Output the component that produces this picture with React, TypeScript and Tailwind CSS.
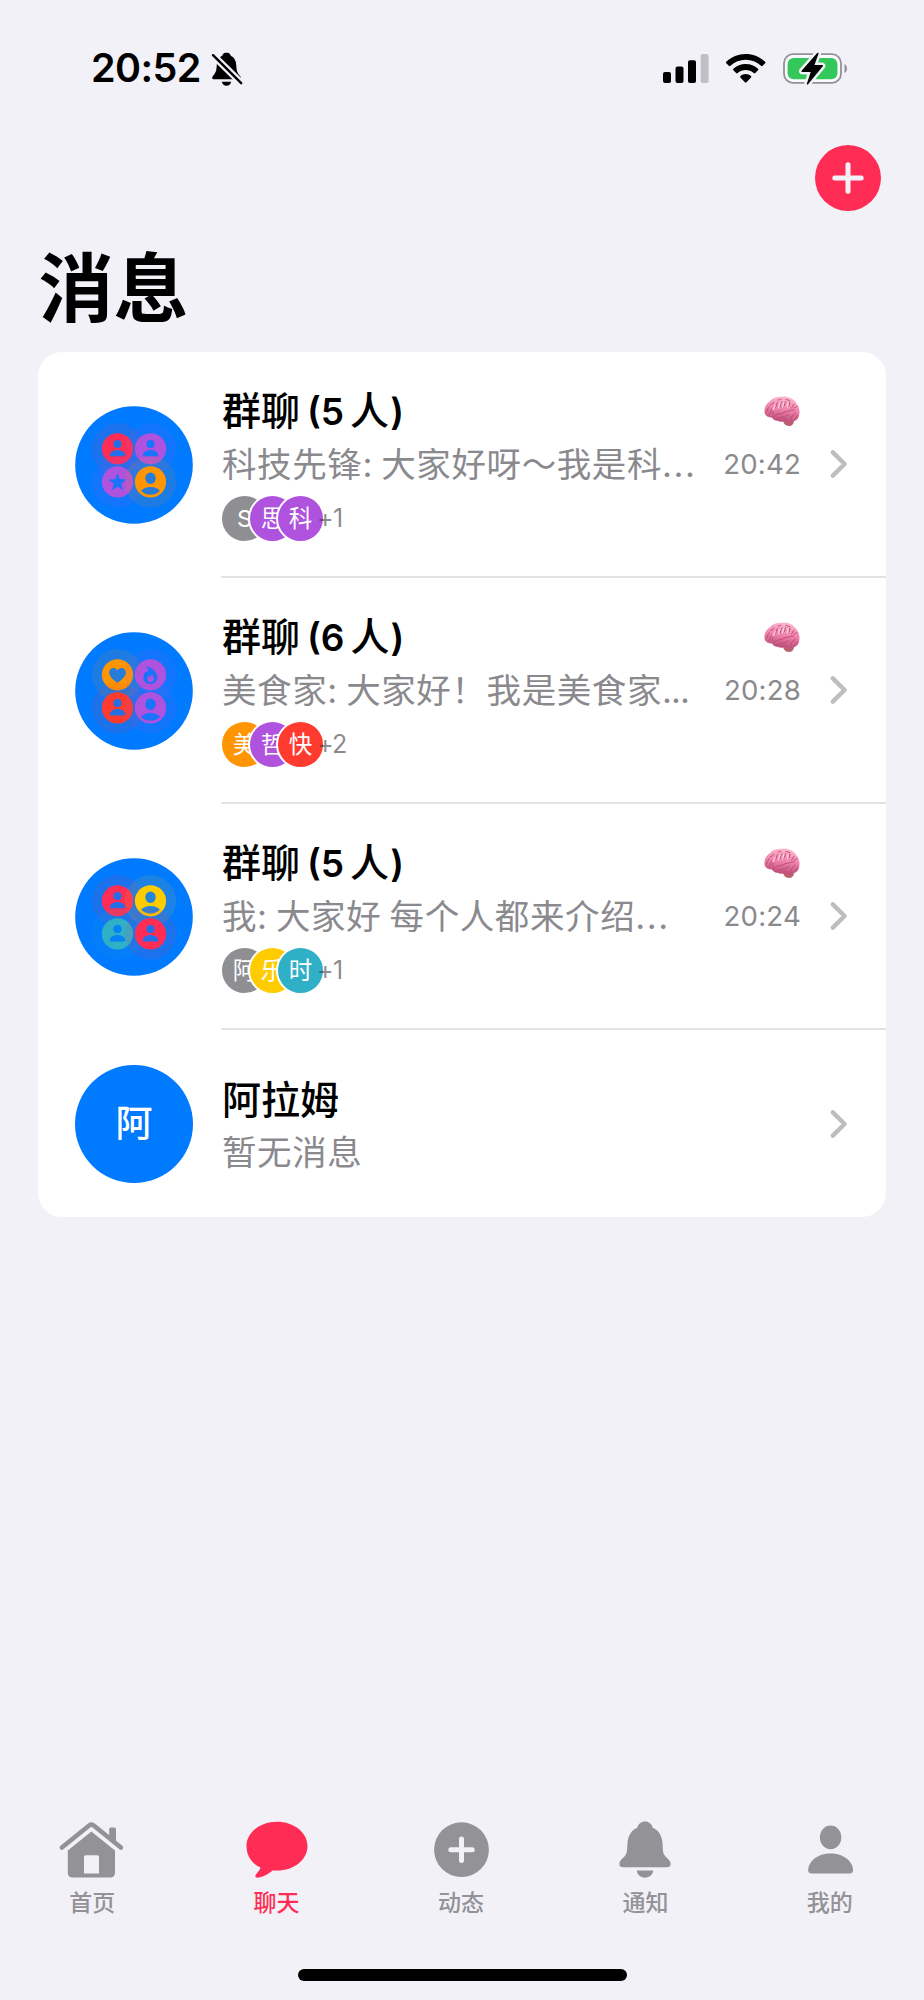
import type { ReactNode } from "react";

type Glyph = "bust" | "crop" | "star" | "heart" | "flame";
type Member = { color: string; glyph: Glyph };
type Mini = { label: string; bg: string };
type Chat = {
  count: number;
  preview: string;
  tightDots?: boolean;
  time: string;
  members: Member[];
  minis: Mini[];
  extra: string;
};

const chats: Chat[] = [
  {
    count: 5,
    preview: "科技先锋: 大家好呀～我是科",
    time: "20:42",
    members: [
      { color: "#ff2d55", glyph: "bust" },
      { color: "#af52de", glyph: "bust" },
      { color: "#af52de", glyph: "star" },
      { color: "#ff9500", glyph: "crop" },
    ],
    minis: [
      { label: "S", bg: "bg-[#8e8e93]" },
      { label: "思", bg: "bg-[#af52de]" },
      { label: "科", bg: "bg-[#af52de]" },
    ],
    extra: "+1",
  },
  {
    count: 6,
    preview: "美食家: 大家好！我是美食家",
    tightDots: true,
    time: "20:28",
    members: [
      { color: "#ff9500", glyph: "heart" },
      { color: "#af52de", glyph: "flame" },
      { color: "#ff3b30", glyph: "bust" },
      { color: "#af52de", glyph: "crop" },
    ],
    minis: [
      { label: "美", bg: "bg-[#ff9500]" },
      { label: "哲", bg: "bg-[#af52de]" },
      { label: "快", bg: "bg-[#ff3b30]" },
    ],
    extra: "+2",
  },
  {
    count: 5,
    preview: "我: 大家好 每个人都来介绍",
    time: "20:24",
    members: [
      { color: "#ff2d55", glyph: "bust" },
      { color: "#ffcc00", glyph: "crop" },
      { color: "#30b0c7", glyph: "bust" },
      { color: "#ff2d55", glyph: "bust" },
    ],
    minis: [
      { label: "阿", bg: "bg-[#8e8e93]" },
      { label: "乐", bg: "bg-[#ffcc00]" },
      { label: "时", bg: "bg-[#30b0c7]" },
    ],
    extra: "+1",
  },
];

function MemberGlyph({ glyph }: { glyph: Glyph }) {
  switch (glyph) {
    case "bust":
      return (
        <>
          <circle cy="-4.8" r="4.1" />
          <path d="M-7.7 6.6C-7.7 3.6-4.3 1.2 0 1.2S7.7 3.6 7.7 6.6Q7.7 7.5 6.8 7.5H-6.8Q-7.7 7.5-7.7 6.6Z" />
        </>
      );
    case "crop":
      return (
        <>
          <ellipse cy="-3.6" rx="5.2" ry="5.7" />
          <path d="M-9.3 9C-7.5 6.6-4.2 5.1 0 5.1S7.5 6.6 9.3 9C7 11.4 3.8 12.6 0 12.6S-7 11.4-9.3 9Z" />
        </>
      );
    case "star":
      return <path d="M0-9L2.3-2.6 9.1-2.4 3.7 1.8 5.6 8.4 0 4.5-5.6 8.4-3.7 1.8-9.1-2.4-2.3-2.6Z" />;
    case "heart":
      return <path d="M0 8.1C-4.5 5-8.3 1.6-8.3-2.2-8.3-4.9-6.4-6.8-4-6.8-2.2-6.8-.8-5.9 0-4.3 .8-5.9 2.2-6.8 4-6.8 6.4-6.8 8.3-4.9 8.3-2.2 8.3 1.6 4.5 5 0 8.1Z" />;
    case "flame":
      return (
        <path
          fillRule="evenodd"
          d="M-4.5-8.8C.8-7.4 6.8-3 6.8 2.5 6.8 6.6 4 9.2-.2 9.2-4.4 9.2-7 6.4-7 2.6-7-.4-5.8-2.8-4.2-3.9-3.8-3.2-3.2-2.6-2.6-2.6-1.9-4.5-2.6-6.9-4.5-8.8ZM.6-.6C.9 1.2-.2 2-1 1.8-1.5 1.6-1.8 1.3-2 1-2.8 2-3.2 3-3.2 4.1-3.2 6.1-1.9 7.3 0 7.3S3.4 6 3.4 4C3.4 2 2.3.3.6-.6Z"
        />
      );
  }
}

function GroupAvatar({ members }: { members: Member[] }) {
  return (
    <svg className="block size-[118px] shrink-0" viewBox="-59 -59 118 118">
      <circle r="58.8" fill="#007aff" />
      {members.map((m, i) => (
        <g key={i} transform={`translate(${i % 2 ? 16.5 : -16.5} ${i < 2 ? -16.2 : 16.9})`}>
          <circle r="25.7" fill={m.color} fillOpacity="0.11" />
          <circle r="15.6" fill={m.color} />
          <g fill="#007aff">
            <MemberGlyph glyph={m.glyph} />
          </g>
          <g fill={m.color} fillOpacity="0.14">
            <MemberGlyph glyph={m.glyph} />
          </g>
        </g>
      ))}
    </svg>
  );
}

function Brain() {
  return (
    <svg className="mr-[1.5px] block h-[31px] w-[36px]" viewBox="0 0 36 31">
      <defs>
        <linearGradient id="brain" x1="0.6" y1="0" x2="0.4" y2="1">
          <stop offset="0" stopColor="#fdb9d0" />
          <stop offset="0.5" stopColor="#ee82aa" />
          <stop offset="1" stopColor="#b84a74" />
        </linearGradient>
      </defs>
      <path d="M19 24c0 3 2.500 6 6 6s5-2.600 5-5.500l-3-2.500z" fill="#b9606f" />
      <path
        d="M.6 17C-.2 12 2 7.500 6 5 9 1.500 14 .4 18.500 .8 24-.2 30 3 32.500 7.500c2.600 3 3.600 7 2.700 11 0 3.500-3.200 7.200-7.200 6.900-2.500 1.300-5 .7-7-.4-2.500 1.100-5 .9-7.500-.3-2.600.1-4.500-1.500-5.500-3.200C4.500 21.500 1.400 20 .6 17z"
        fill="url(#brain)"
      />
      <g fill="none" stroke="#bf4b76" strokeWidth="1" strokeLinecap="round">
        <path d="M2.500 16c1.500-2 1-4 2.800-5.500M5 19c1.800-1.500 1-4 2.600-6M9 19c-1-2 .4-3.500.3-5.500M6.500 8.500c1.800.2 2.500-1 3-2.500M11 12c1.800-1 1-4 2.500-5.500M14 4c1-.6 2 .1 3-.7M16 11c1-1.500.4-3.500 2-5M20 10c1.200-1 .6-3 1.700-4.500M22 3.500c1.500-.3 2 1 3.500 1M25 10c1-1.200 0-2.600 1-4M27.500 12c1.600-.8 1-2.800 2.400-3.700M33 10.500c-1.200.3-1.600 1.500-3 1.500" />
        <path d="M8.500 21c2.600-.2 3.500-3.700 7-3.200 3 .3 4.500-2.600 8-2.600 2.700 0 3.500-1.700 6.500-1.200M12 23c2.500-.4 4-2.400 6.500-1.900 3 .2 3.500-2.300 6.500-2.300M18 24.500c1-.8 3-.5 4.500-1.500M27 24.500c.5-2-.5-3 1-4.500s2.500-1 3-3M31 23c.8-1.500 1-2.500 2.600-3.500" />
      </g>
      <path d="M9 14c.8-2.500 2-3 2.200-4.500M14.500 12c.2-2 1.200-3.300 1.600-4.800M18.500 11c.3-2 1-2.800 1.300-4.500M23.500 11c.2-2 .6-2.500.4-4.300" fill="none" stroke="#ffd9e6" strokeWidth="1.100" strokeLinecap="round" />
    </svg>
  );
}

function Chevron() {
  return (
    <svg className="ml-[28px] mr-[1px] block h-[32px] w-[22px] shrink-0" viewBox="0 0 22 32" fill="none" stroke="#bebec0" strokeWidth="4.500" strokeLinecap="round" strokeLinejoin="round">
      <path d="M3.800 4.400L15.600 16 3.800 27.600" />
    </svg>
  );
}

function ChatRow({ chat }: { chat: Chat }) {
  return (
    <li className="flex h-[226px] items-center pl-[37px]">
      <GroupAvatar members={chat.members} />
      <div className="ml-[28px] flex h-full flex-1 items-center border-b-2 border-[#e2e2e4] pl-[1px] pr-[34px]">
        <div className="flex-1 pt-[3px]">
          <div className="flex h-[53px] items-center justify-between">
            <h2 className="whitespace-pre text-[39px] font-medium leading-[53px]">
              群聊<span className="pl-[7px] text-[37px] font-semibold">({chat.count}</span>
              <span className="pl-[6px]">人</span>
              <span className="pl-[1px] text-[37px] font-semibold">)</span>
            </h2>
            <Brain />
          </div>
          <div className="flex h-[54px] items-center justify-between text-[#8a8a8e]">
            <p className="whitespace-pre text-[34.5px] leading-[54px] tracking-[0.6px] [word-spacing:-2px]">
              {chat.preview}
              <span className={chat.tightDots ? "tracking-[-0.9px]" : "tracking-[1.6px]"}>...</span>
            </p>
            <time className="text-[27.6px] tracking-[0.2px]">{chat.time}</time>
          </div>
          <div className="flex h-[54px] items-center">
            {chat.minis.map((m) => (
              <span
                key={m.label}
                className={`-ml-[2px] -mr-[19px] flex size-[49px] items-center justify-center rounded-full border-2 border-white text-[23.5px] text-white ${m.bg}`}
              >
                {m.label}
              </span>
            ))}
            <span className="relative ml-[11px] text-[25px] tracking-[-0.6px] text-[#3c3c43]/60">{chat.extra}</span>
          </div>
        </div>
        <Chevron />
      </div>
    </li>
  );
}

function Tab({ label, active, children }: { label: string; active?: boolean; children: ReactNode }) {
  return (
    <a className={`flex flex-1 flex-col items-center ${active ? "text-[#ff2d55]" : "text-[#929297]"}`}>
      <svg className="block h-[60px] w-[68px]" viewBox="-34 -30 68 60" fill="currentColor">
        {children}
      </svg>
      <span className="mt-[6px] text-[23px] font-medium leading-[34px]">{label}</span>
    </a>
  );
}

export default function App() {
  return (
    <div className="flex h-[2000px] w-[924px] flex-col bg-[#f2f1f7] text-black [font-family:Inter,'Noto_Sans_CJK_SC',sans-serif]">
      <header className="flex h-[137px] items-center pl-[91px] pr-[76px]">
        <span className="w-[109px] pt-[1px] text-[39.5px] font-semibold leading-none tracking-[-0.6px]">20:52</span>
        <svg className="ml-[10px] block h-[36px] w-[34px]" viewBox="210 51 34 36">
          <path d="M226.500 52.600c-2.300 0-3.900 1.400-4.300 3.100-3.600 1.600-5.300 5-5.500 9.800-.2 5-1 7.500-3.600 10.200-1.300 1.400-1.400 3.600.9 3.600h25c2.300 0 2.200-2.200.9-3.600-2.600-2.700-3.400-5.200-3.600-10.200-.2-4.800-1.900-8.200-5.500-9.800-.4-1.700-2-3.100-4.300-3.100zM221.800 81.700h9.400c-.6 2.400-2.400 4-4.700 4s-4.100-1.600-4.700-4z" />
          <path d="M213 55.200L241.500 83.200" stroke="#f2f1f7" strokeWidth="7" />
          <path d="M213 55.200L241.200 83.200" stroke="#000" strokeWidth="2.400" strokeLinecap="round" />
        </svg>
        <svg className="ml-auto block h-[36px] w-[188px]" viewBox="660 51 188 36">
          <rect x="663" y="72" width="8" height="11" rx="2" />
          <rect x="675.500" y="66.500" width="8" height="16.500" rx="2" />
          <rect x="688" y="60.300" width="8" height="22.700" rx="2" />
          <rect x="700.600" y="54" width="8" height="29" rx="2" fill="#c0bfc5" />
          <path d="M745.700 54c7.500 0 14.300 2.900 19.400 7.700.5.500.5 1.100 0 1.600l-2.500 2.500c-.5.500-1.100.5-1.600 0-4.100-3.800-9.500-6-15.300-6s-11.200 2.200-15.300 6c-.5.500-1.100.5-1.600 0l-2.500-2.500c-.5-.5-.5-1.100 0-1.600 5.100-4.800 11.900-7.700 19.400-7.700z" />
          <path d="M745.700 63.900c4.700 0 9.100 1.800 12.300 4.800.5.500.5 1.100 0 1.600l-2.700 2.700c-.5.500-1.100.5-1.600 0-2.100-2-4.900-3.100-8-3.100s-5.900 1.100-8 3.100c-.5.500-1.100.5-1.600 0l-2.700-2.700c-.5-.5-.5-1.100 0-1.600 3.200-3 7.600-4.800 12.300-4.800z" />
          <path d="M745.700 74c2 0 3.900.8 5.300 2 .5.500.5 1.100 0 1.600l-4.500 4.700c-.5.500-1.100.5-1.600 0l-4.500-4.700c-.5-.5-.5-1.100 0-1.600 1.400-1.200 3.300-2 5.300-2z" />
          <rect x="784" y="54.200" width="57" height="28.600" rx="9" fill="#fbfbfd" stroke="#929296" strokeWidth="1.800" />
          <rect x="787.600" y="57.900" width="49.800" height="21.300" rx="6" fill="#34c759" />
          <path d="M844.500 64v9.200c1.600-.8 2.500-2.500 2.500-4.600s-.9-3.800-2.500-4.600z" fill="#929296" />
          <path
            d="M817 53.200l-15.200 17.200c-.7.900-.3 1.500.6 1.500h8.300l-3.800 11.500c-.4 1.200.7 1.500 1.400.6l14.300-17.400c.7-.9.300-1.500-.6-1.500h-7.500l4-11.300c.4-1.200-.7-1.500-1.500-.6z"
            stroke="#f2f1f7"
            strokeWidth="5"
            strokeLinejoin="round"
            paintOrder="stroke"
          />
        </svg>
      </header>

      <div className="mt-[8px] flex h-[66px] justify-end pr-[43px]">
        <button className="flex size-[66px] items-center justify-center rounded-full bg-[#ff2d55]">
          <svg className="block size-[32px]" viewBox="0 0 32 32" stroke="#f2f1f7" strokeWidth="5" strokeLinecap="round">
            <path d="M16 2.800V29.200M2.800 16H29.200" />
          </svg>
        </button>
      </div>

      <h1 className="h-[140.500px] pl-[38.5px] pt-[25px] text-[75px] font-bold leading-[106px]">消息</h1>

      <ul className="mx-[38px] h-[865px] rounded-[24px] bg-white">
        {chats.map((c) => (
          <ChatRow key={c.time} chat={c} />
        ))}
        <li className="flex h-[188.5px] items-center pl-[37px] pr-[34px]">
          <span className="flex size-[118px] items-center justify-center rounded-full bg-[#007aff] text-[37px] font-medium text-white">阿</span>
          <div className="ml-[29px] flex-1 pt-[5px]">
            <h2 className="text-[39px] font-medium leading-[53px]">阿拉姆</h2>
            <p className="text-[34.5px] leading-[54px] tracking-[0.6px] text-[#8a8a8e]">暂无消息</p>
          </div>
          <Chevron />
        </li>
      </ul>

      <nav className="mt-auto flex h-[149.5px] pr-[2px]">
        <Tab label="首页">
          <path d="M-29.500 -2.500L-2-24.700Q0-26.200 2-24.700L29.500-2.500" transform="translate(-.6 0)" fill="none" stroke="currentColor" strokeWidth="4.600" strokeLinecap="round" strokeLinejoin="round" />
          <path d="M17.200-20.800q0-1.600 1.600-1.600h3.600q1.600 0 1.600 1.600V-5l-6.800-5.500z" />
          <path fillRule="evenodd" d="M-.6-18.500L23 .6V22.500Q23 27.600 18 27.600H-19.200Q-24.200 27.600-24.200 22.500V.6ZM-6.400 5.300Q-8 5.300-8 7V23.400H7V7Q7 5.300 5.400 5.300Z" />
        </Tab>
        <Tab label="聊天" active>
          <path d="M0-28.300C17-28.300 30.500-17.500 30.500-4S17.500 20.600 0 20.600H-4.500C-8 23.600-13.500 27.400-19.500 27.700-21.500 27.700-22.300 26-21 24.400-19 22-16.500 19.500-16.600 17.500-25.500 13.500-30.500 5.500-30.500-4-30.500-17.500-17-28.300 0-28.300Z" />
        </Tab>
        <Tab label="动态">
          <circle cx=".5" cy="-.3" r="27.400" />
          <path d="M.5-11V10.400M-10.200-.3H11.200" stroke="#f2f1f7" strokeWidth="5" strokeLinecap="round" />
        </Tab>
        <Tab label="通知">
          <path d="M0-28.400C3.800-28.400 6.700-26 7.700-22.300 13.500-20 16.900-14.500 17.500-7 18 0 17.500 3.200 20.300 6.200 23 9 25.600 10.800 25.600 14 25.600 16.200 24.300 17.300 22 17.300H-22C-24.300 17.300-25.600 16.200-25.600 14-25.600 10.800-23 9-20.300 6.200-17.500 3.200-18 0-17.500-7-16.900-14.500-13.500-20-7.700-22.300-6.700-26-3.800-28.400 0-28.400ZM-8.300 20.600H8.300C7.600 25 4.300 27.700 0 27.700S-7.600 25-8.300 20.600Z" />
        </Tab>
        <Tab label="我的">
          <ellipse cx=".6" cy="-12.600" rx="10.700" ry="11.800" />
          <path d="M.6 3.600C13.500 3.600 23 11.500 23 20.300 23 22.400 21.800 23.600 19.500 23.600H-18.300C-20.600 23.600-21.800 22.400-21.800 20.300-21.800 11.500-12.300 3.600.6 3.600Z" />
        </Tab>
      </nav>
      <div className="mx-auto mb-[19px] h-[12px] w-[329px] shrink-0 rounded-full bg-black" />
    </div>
  );
}
